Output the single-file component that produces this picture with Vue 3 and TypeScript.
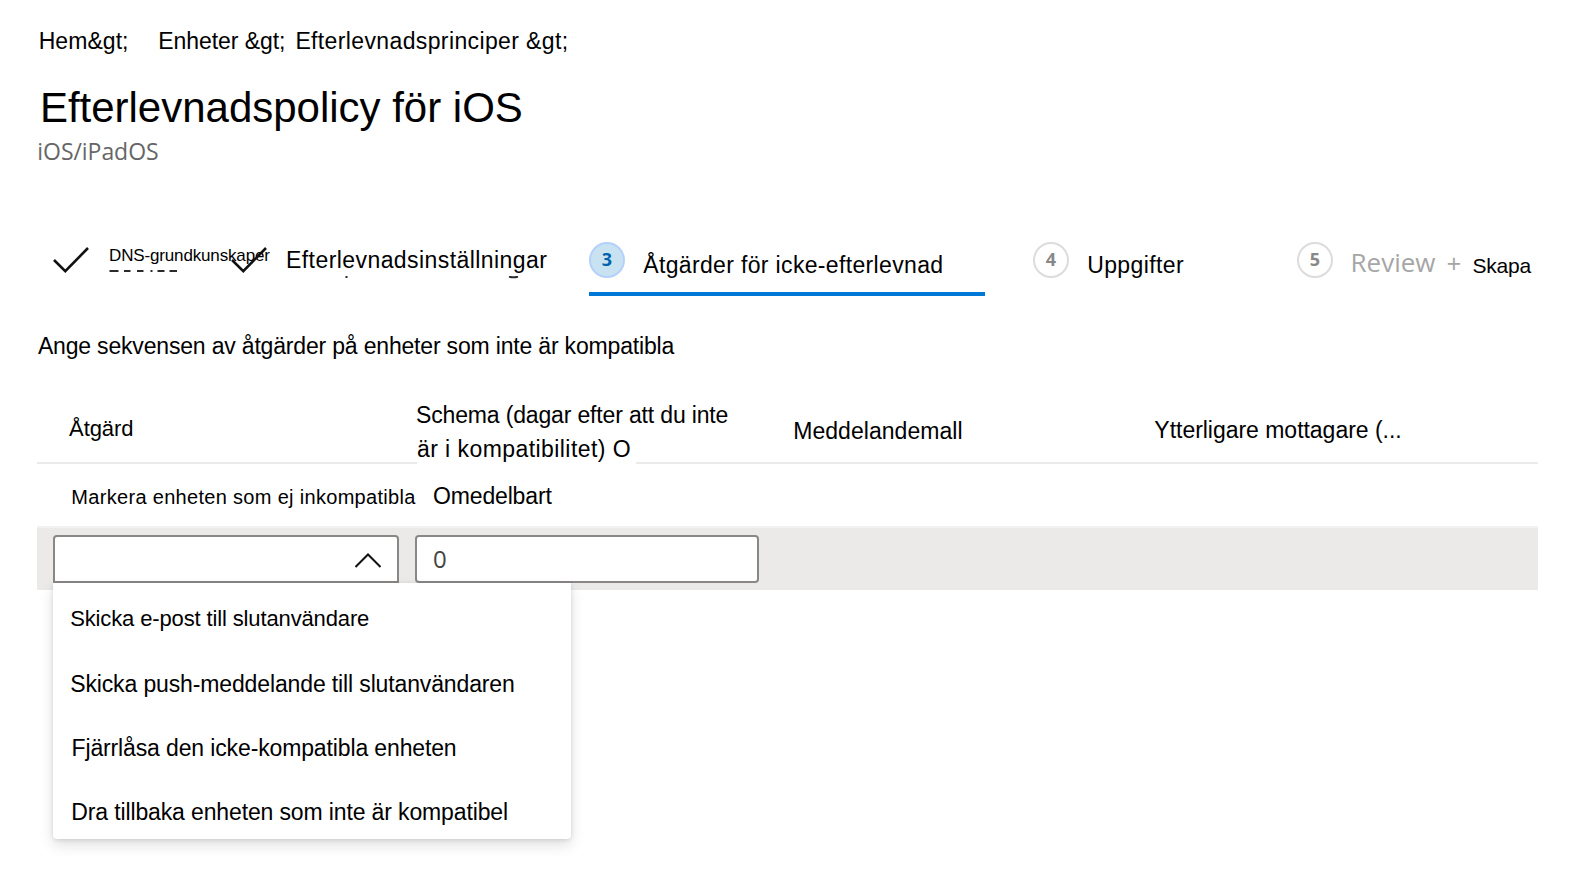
<script setup lang="ts">
import { ref } from 'vue'

interface Option {
  id: string
  label: string
}

const crumbs: Option[] = [
  { id: 'home', label: 'Hem&gt;' },
  { id: 'devices', label: 'Enheter &gt;' },
  { id: 'policies', label: 'Efterlevnadsprinciper &gt;' },
]

const options: Option[] = [
  { id: 'email', label: 'Skicka e-post till slutanvändare' },
  { id: 'push', label: 'Skicka push-meddelande till slutanvändaren' },
  { id: 'lock', label: 'Fjärrlåsa den icke-kompatibla enheten' },
  { id: 'retire', label: 'Dra tillbaka enheten som inte är kompatibel' },
]

const open = ref(true)
const days = ref('0')
</script>

<template>
  <main class="page">
    <nav class="crumbs">
      <span v-for="c in crumbs" :key="c.id" :class="['crumb', c.id]">{{ c.label }}</span>
    </nav>
    <h1 class="title">Efterlevnadspolicy för iOS</h1>
    <div class="subtitle">iOS/iPadOS</div>

    <ol class="wizard">
      <li class="step basics">
        <svg class="check" viewBox="0 0 38 28"><path d="M2 14 13.300 25.200 36 2" /></svg>
        <span class="label">DNS-grundkunskaper</span>
        <svg class="marks" viewBox="0 0 70 3">
          <path d="M0.500 1H9.500M15 1h6.500M28 1h6.500M41.500 1h2M48.500 1h7M60.500 1h7.500" />
        </svg>
      </li>
      <li class="step settings">
        <svg class="check" viewBox="0 0 38 28"><path d="M2 14 13.300 25.200 36 2" /></svg>
        <span class="label">Efterlevnadsinställningar</span>
        <svg class="marks" viewBox="0 0 176 3">
          <path d="M0.500 1h2M164 0.500q4.500 1.600 9 0" />
        </svg>
      </li>
      <li class="step actions">
        <span class="num active">3</span>
        <span class="label">Åtgärder för icke-efterlevnad</span>
      </li>
      <li class="step assign">
        <span class="num">4</span>
        <span class="label">Uppgifter</span>
      </li>
      <li class="step review">
        <span class="num">5</span>
        <span class="muted">Review</span>
        <span class="muted plus">+</span>
        <span class="label">Skapa</span>
      </li>
    </ol>

    <p class="intro">Ange sekvensen av åtgärder på enheter som inte är kompatibla</p>

    <section class="table">
      <div class="row head">
        <div class="h-action">Åtgärd</div>
        <div class="h-schedule">
          <div class="line-one">Schema (dagar efter att du inte</div>
          <div class="line-two">är i kompatibilitet) O</div>
        </div>
        <div class="h-template">Meddelandemall</div>
        <div class="h-extra">Ytterligare mottagare (...</div>
      </div>
      <div class="row fixed">
        <div class="c-action">Markera enheten som ej inkompatibla</div>
        <div class="c-schedule">Omedelbart</div>
      </div>
      <div class="row edit">
        <div class="combo" @click="open = !open">
          <svg class="chevron" viewBox="0 0 28 16"><path d="M1.500 14 14 1.500 26.500 14" /></svg>
          <ul v-if="open" class="menu">
            <li v-for="o in options" :key="o.id" :class="o.id">{{ o.label }}</li>
          </ul>
        </div>
        <div class="days">{{ days }}</div>
      </div>
    </section>
  </main>
</template>

<style>
body {
  background: #fff;
}
</style>

<style scoped>
.page {
  box-sizing: border-box;
  width: 1592px;
  height: 892px;
  padding-top: 26px;
  overflow: hidden;
  background: #fff;
  color: #000;
  font: 23px/30px "Liberation Sans", Arial, sans-serif;
  white-space: nowrap;
}
.crumbs {
  display: flex;
  padding-left: 38.7px;
  height: 30px;
}
.crumb.home { width: 119.5px; letter-spacing: 0.05px; }
.crumb.devices { width: 137.2px; letter-spacing: -0.06px; }
.crumb.policies { letter-spacing: 0.373px; }
.title {
  margin: 27px 0 0 39.9px;
  font-size: 42px;
  font-weight: 400;
  line-height: 50px;
  letter-spacing: -0.01px;
}
.subtitle {
  margin: 3px 0 0 37.3px;
  font-family: "Open Sans", sans-serif;
  letter-spacing: -0.05px;
  color: #666;
}
.wizard {
  display: flex;
  align-items: flex-start;
  list-style: none;
  margin: 70px 0 0;
  padding: 0 0 0 52px;
  height: 60px;
}
.step {
  position: relative;
  display: flex;
  align-items: flex-start;
  flex: none;
  box-sizing: border-box;
  height: 60px;
}
.check {
  flex: none;
  width: 38px;
  height: 28px;
  margin-top: 10px;
  fill: none;
  stroke: #111;
  stroke-width: 2.6;
}
.basics { width: 178px; }
.basics .label { margin: 5px 0 0 19px; font-size: 17px; letter-spacing: -0.15px; }
.settings { width: 359px; }
.settings .label { margin: 9px 0 0 18px; letter-spacing: 0.43px; }
.marks {
  position: absolute;
  height: 3px;
  fill: none;
  stroke: #2b2b2b;
  stroke-width: 2;
}
.basics .marks { left: 57px; top: 34px; width: 70px; }
.settings .marks { left: 114.500px; top: 40px; width: 176px; }
.actions { width: 396px; border-bottom: 4px solid #0078d7; margin-right: 48px; }
.actions .label { margin: 14px 0 0 18.300px; letter-spacing: 0.343px; }
.assign { width: 264px; }
.assign .label { margin: 14px 0 0 18.200px; letter-spacing: 0.379px; }
.num {
  flex: none;
  box-sizing: border-box;
  width: 36px;
  height: 36px;
  margin-top: 5.500px;
  border: 2px solid #dcdcdc;
  border-radius: 50%;
  font: 700 18px/31px "Open Sans", sans-serif;
  text-align: center;
  color: #888;
}
.num.active {
  border-color: #b3d1fb;
  background: #c9e2f1;
  color: #0062ad;
}
.muted {
  margin: 11px 0 0 17.500px;
  width: 85px;
  font-family: "Open Sans", sans-serif;
  font-size: 26px;
  color: #a6a6a6;
}
.muted.plus { margin: 12px 0 0 11px; width: 26px; }
.review .label { margin-top: 15px; font-size: 21px; letter-spacing: -0.241px; }
.intro {
  margin: 35px 0 0 37.9px;
  letter-spacing: -0.18px;
}
.table {
  width: 1501px;
  margin: 37px 0 0 37px;
}
.row {
  display: flex;
  align-items: flex-start;
  box-sizing: border-box;
}
.head { height: 66px; border-bottom: 2px solid #eaeaea; }
.h-action { margin: 16px 0 0 32.100px; width: 347.900px; font-size: 22px; letter-spacing: -0.1px; }
.h-schedule { width: 376.200px; line-height: 34px; }
.line-one { margin-left: -1px; letter-spacing: -0.156px; }
.line-two { width: 219px; background: #fff; letter-spacing: 0.433px; }
.h-template { margin-top: 18px; width: 361.200px; letter-spacing: 0.049px; }
.h-extra { margin-top: 17px; letter-spacing: -0.028px; }
.fixed { height: 62px; }
.c-action { margin: 18px 0 0 34.300px; width: 361.700px; font-size: 20px; letter-spacing: 0.312px; }
.c-schedule { margin-top: 17px; letter-spacing: -0.15px; }
.edit {
  height: 64px;
  padding: 7px 16px 0;
  gap: 16px;
  border-top: 2px solid #f1f1f0;
  background: #ebeae8;
}
.combo,
.days {
  box-sizing: border-box;
  height: 48px;
  border: 2px solid #8a8886;
  border-radius: 4px;
  background: #fff;
}
.combo {
  position: relative;
  display: flex;
  justify-content: flex-end;
  width: 346px;
  padding: 16px 15px 0 0;
  border-radius: 4px 4px 0 0;
}
.days {
  width: 344px;
  padding: 7px 0 0 16px;
  font-family: "Open Sans", sans-serif;
  font-size: 24px;
  line-height: 30px;
  color: #444;
}
.chevron {
  width: 28px;
  height: 16px;
  fill: none;
  stroke: #111;
  stroke-width: 2;
}
.menu {
  position: absolute;
  left: -2px;
  top: 46px;
  box-sizing: border-box;
  width: 518px;
  height: 256px;
  margin: 0;
  padding: 21px 0 0 17.200px;
  list-style: none;
  background: #fff;
  border-radius: 0 0 4px 4px;
  box-shadow: 0 6px 14px rgba(0, 0, 0, 0.13), 0 1px 4px rgba(0, 0, 0, 0.11);
}
.menu li { height: 64px; letter-spacing: -0.132px; }
.menu .email { height: 65px; font-size: 22px; }
.menu .lock { padding-left: 1.300px; }
.menu .retire { padding-left: 1.100px; }
</style>
